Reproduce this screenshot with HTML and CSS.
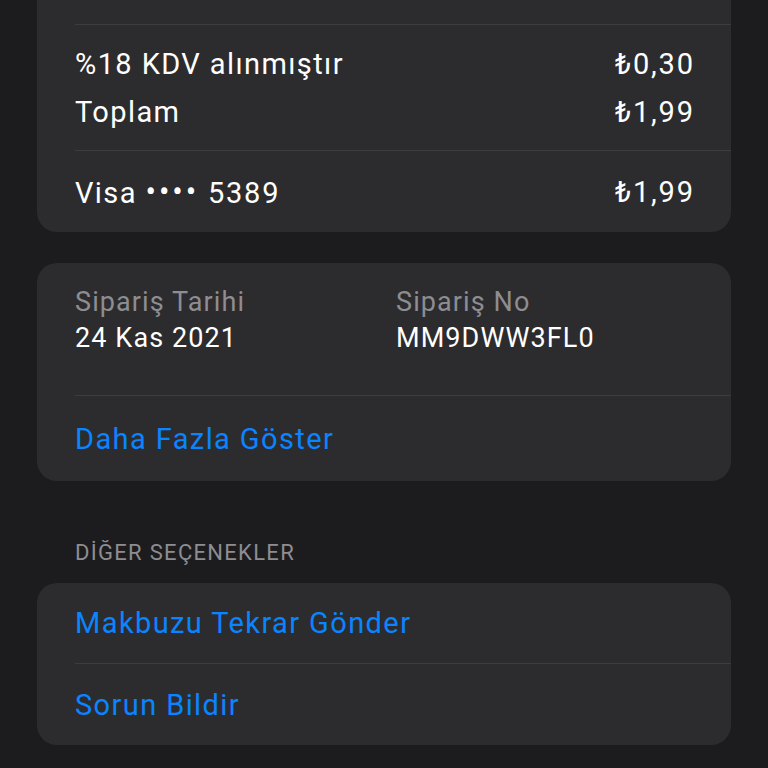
FILE: index.html
```html
<!DOCTYPE html>
<html lang="tr">
<head>
  <meta charset="UTF-8" />
  <meta name="viewport" content="width=device-width, initial-scale=1.0"/>
  <title>Makbuz</title>
  <link rel="stylesheet" href="styles.css">
</head>
<body>
  <div class="page">
    <div class="card card-top">
      <div class="spacer"></div>
      <div class="section totals">
        <div class="row"><span>%18 KDV alınmıştır</span><span class="amount">₺0,30</span></div>
        <div class="row"><span>Toplam</span><span class="amount">₺1,99</span></div>
      </div>
      <div class="section payment">
        <div class="row">
          <span>Visa <span class="dots">••••</span> <span class="digits">5389</span></span>
          <span class="amount">₺1,99</span>
        </div>
      </div>
    </div>

    <div class="card">
      <div class="section info">
        <div class="info-col">
          <div class="label">Sipariş Tarihi</div>
          <div class="value">24 Kas 2021</div>
        </div>
        <div class="info-col">
          <div class="label">Sipariş No</div>
          <div class="value">MM9DWW3FL0</div>
        </div>
      </div>
      <div class="section link-row first"><a href="#">Daha Fazla Göster</a></div>
    </div>

    <div class="group-title">DİĞER SEÇENEKLER</div>

    <div class="card">
      <div class="section link-row first tall"><a href="#">Makbuzu Tekrar Gönder</a></div>
      <div class="section link-row"><a href="#">Sorun Bildir</a></div>
    </div>
  </div>
</body>
</html>
```

FILE: styles.css
```css
body {
  margin: 0;
  padding: 0;
  background: #1c1c1e;
  font-family: Roboto, 'Noto Sans', sans-serif;
  color: #fff;
  overflow: hidden;
}

.page {
  padding: 0 37px;
}

.card {
  background: #2c2c2e;
  border-radius: 20px;
  margin-bottom: 31px;
}

.card-top {
  margin-top: -30px;
}

.spacer {
  height: 54px;
}

.section {
  margin-left: 38px;
  padding-right: 38px;
  border-top: 1px solid #3d3d40;
}

.card .section:first-child {
  border-top: none;
}

.row {
  display: flex;
  justify-content: space-between;
  align-items: center;
  font-size: 29px;
  letter-spacing: 1.4px;
}

.amount {
  letter-spacing: 1.8px;
  margin-right: -1.8px;
}

.dots {
  letter-spacing: 3px;
  font-size: 31px;
  vertical-align: 1px;
}

.digits {
  letter-spacing: 1.8px;
}

.totals {
  padding: 15px 38px 14px 0;
}

.totals .row {
  height: 48px;
}

.payment .row {
  height: 81px;
}

.info {
  display: flex;
  padding-top: 21px;
  padding-bottom: 39px;
}

.info-col {
  flex: 0 0 321px;
}

.label,
.value {
  font-size: 27px;
  line-height: 36px;
  letter-spacing: 1.1px;
}

.label {
  color: #8d8d92;
}

.link-row {
  display: flex;
  align-items: center;
  height: 85px;
  font-size: 29px;
  letter-spacing: 1.4px;
}

.link-row.tall {
  height: 80px;
}

.card .link-row + .link-row {
  height: 81px;
}

.card .link-row.first {
  border-top: 1px solid #3d3d40;
}

.card .link-row.first:first-child {
  border-top: none;
}

.link-row a {
  color: #0a84ff;
  text-decoration: none;
}

.group-title {
  color: #8d8d92;
  font-size: 22px;
  letter-spacing: 1.3px;
  padding: 28px 38px 18px;
}
```
